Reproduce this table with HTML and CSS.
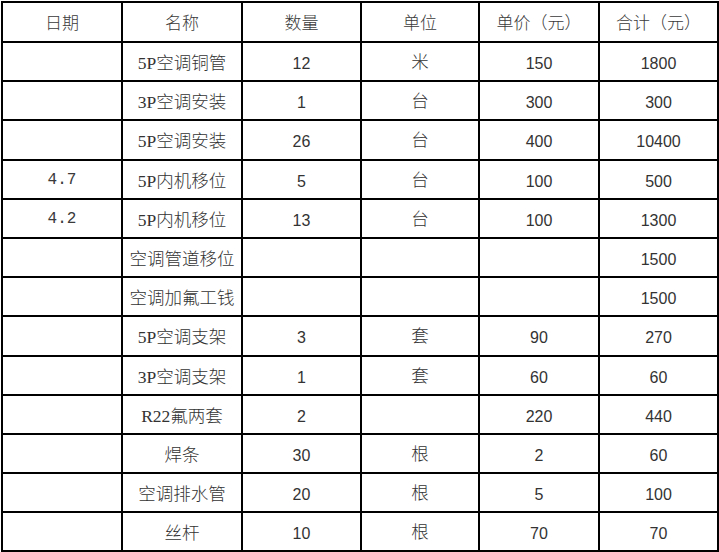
FILE: index.html
```html
<!DOCTYPE html>
<html lang="zh-CN">
<head>
<meta charset="utf-8">
<title>材料清单</title>
<link rel="stylesheet" href="styles.css">
</head>
<body>
<table class="sheet">
  <thead>
    <tr>
      <th class="c1">日期</th>
      <th class="c2">名称</th>
      <th class="c3">数量</th>
      <th class="c4">单位</th>
      <th class="c5">单价（元）</th>
      <th class="c6">合计（元）</th>
    </tr>
  </thead>
  <tbody>
    <tr><td class="date"></td><td class="name">5P空调铜管</td><td class="num">12</td><td class="unit">米</td><td class="num">150</td><td class="num">1800</td></tr>
    <tr><td class="date"></td><td class="name">3P空调安装</td><td class="num">1</td><td class="unit">台</td><td class="num">300</td><td class="num">300</td></tr>
    <tr><td class="date"></td><td class="name">5P空调安装</td><td class="num">26</td><td class="unit">台</td><td class="num">400</td><td class="num">10400</td></tr>
    <tr><td class="date">4.7</td><td class="name">5P内机移位</td><td class="num">5</td><td class="unit">台</td><td class="num">100</td><td class="num">500</td></tr>
    <tr><td class="date">4.2</td><td class="name">5P内机移位</td><td class="num">13</td><td class="unit">台</td><td class="num">100</td><td class="num">1300</td></tr>
    <tr><td class="date"></td><td class="name">空调管道移位</td><td class="num"></td><td class="unit"></td><td class="num"></td><td class="num">1500</td></tr>
    <tr><td class="date"></td><td class="name">空调加氟工钱</td><td class="num"></td><td class="unit"></td><td class="num"></td><td class="num">1500</td></tr>
    <tr><td class="date"></td><td class="name">5P空调支架</td><td class="num">3</td><td class="unit">套</td><td class="num">90</td><td class="num">270</td></tr>
    <tr><td class="date"></td><td class="name">3P空调支架</td><td class="num">1</td><td class="unit">套</td><td class="num">60</td><td class="num">60</td></tr>
    <tr><td class="date"></td><td class="name">R22氟两套</td><td class="num">2</td><td class="unit"></td><td class="num">220</td><td class="num">440</td></tr>
    <tr><td class="date"></td><td class="name">焊条</td><td class="num">30</td><td class="unit">根</td><td class="num">2</td><td class="num">60</td></tr>
    <tr><td class="date"></td><td class="name">空调排水管</td><td class="num">20</td><td class="unit">根</td><td class="num">5</td><td class="num">100</td></tr>
    <tr><td class="date"></td><td class="name">丝杆</td><td class="num">10</td><td class="unit">根</td><td class="num">70</td><td class="num">70</td></tr>
  </tbody>
</table>
</body>
</html>
```

FILE: styles.css
```css
html, body {
  margin: 0;
  padding: 0;
  background: #ffffff;
}

body {
  overflow: hidden;
}

.sheet {
  margin: 1px 0 0 1px;
  border-collapse: separate;
  border-spacing: 0;
  table-layout: fixed;
  width: 718px;
  border-left: 2px solid #000;
  border-top: 2px solid #000;
  color: #333;
  font-family: "Noto Sans CJK SC", sans-serif;
}

.sheet th,
.sheet td {
  box-sizing: border-box;
  border-right: 2px solid #000;
  border-bottom: 2px solid #000;
  padding: 0;
  text-align: center;
  vertical-align: middle;
  white-space: nowrap;
  line-height: 1.2;
}

.sheet th {
  height: 40px;
  font-weight: 300;
  font-size: 17px;
  color: #3a3a3a;
}

.sheet td {
  height: 39.2px;
}

.c1 { width: 120px; }
.c2 { width: 120px; }
.c3 { width: 119px; }
.c4 { width: 118px; }
.c5 { width: 120px; }
.c6 { width: 119px; }

.sheet td.date {
  font-family: "Liberation Mono", monospace;
  font-size: 16px;
  color: #3a3a3a;
  padding-top: 2px;
}

.sheet td.name {
  font-family: "Liberation Serif", "Noto Sans CJK SC", serif;
  font-size: 17.5px;
  font-weight: 300;
  color: #333;
  padding-top: 4px;
}

.sheet td.num {
  font-family: "Liberation Sans", Arial, sans-serif;
  font-size: 16px;
  color: #333;
  padding-top: 4px;
}

.sheet td.unit {
  font-family: "Noto Sans CJK SC", sans-serif;
  font-size: 17.5px;
  font-weight: 300;
  color: #333;
  padding-bottom: 2px;
}
```
